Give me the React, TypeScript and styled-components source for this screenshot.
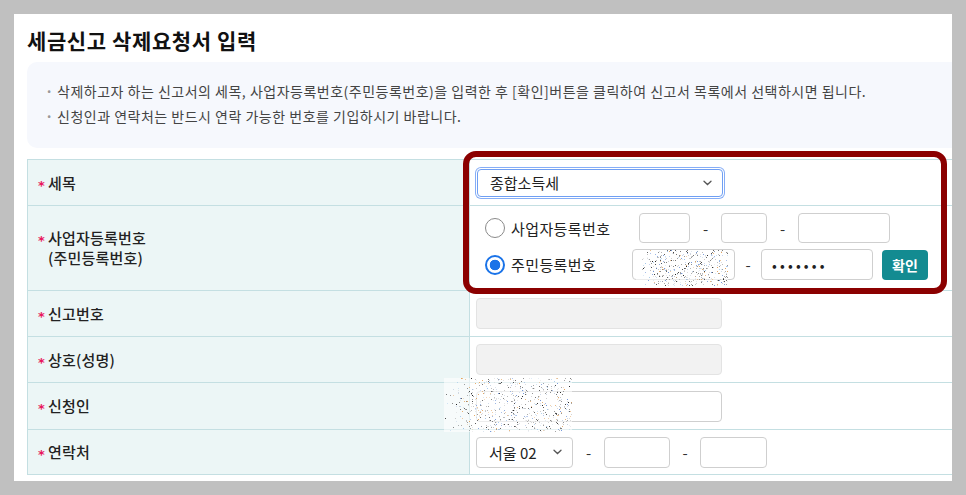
import React, { useMemo } from 'react'
import styled, { createGlobalStyle } from 'styled-components'

const GlobalStyle = createGlobalStyle`
  html, body {
    margin: 0;
    padding: 0;
  }
  body {
    font-family: "Noto Sans CJK KR", "Noto Sans", sans-serif;
    color: #222;
  }
  * {
    box-sizing: border-box;
  }
`

// small seeded random so the mosaic is the same on every run
const mulberry32 = (a: number) => () => {
  a |= 0
  a = (a + 0x6d2b79f5) | 0
  let t = Math.imul(a ^ (a >>> 15), 1 | a)
  t = (t + Math.imul(t ^ (t >>> 7), 61 | t)) ^ t
  return ((t ^ (t >>> 14)) >>> 0) / 4294967296
}

const NOISE_COLORS = ['#222', '#444', '#777', '#999', '#bbb', '#6f93d8', '#9cc3e8', '#e3a35c', '#c9d6e6', '#d8d8d8']

interface NoiseProps {
  seed: number
  w: number
  h: number
  count: number
  x: number
  y: number
}

const Noise: React.FC<NoiseProps> = ({ seed, w, h, count, x, y }) => {
  const dots = useMemo(() => {
    const rnd = mulberry32(seed)
    const list = []
    for (let i = 0; i < count; i++) {
      const px = Math.floor(rnd() * w)
      const py = Math.floor(rnd() * h)
      // thin out the left edge so it fades like the reference
      if (px < w * 0.25 && rnd() > px / (w * 0.25)) continue
      list.push({
        x: px,
        y: py,
        c: NOISE_COLORS[Math.floor(rnd() * NOISE_COLORS.length)],
        o: 0.3 + rnd() * 0.7,
      })
    }
    return list
  }, [seed, w, h, count])

  return (
    <NoiseLayer style={{ left: x, top: y, width: w, height: h }}>
      <svg width={w} height={h} viewBox={`0 0 ${w} ${h}`}>
        {dots.map((d, i) => (
          <rect key={i} x={d.x} y={d.y} width={1} height={1} fill={d.c} opacity={d.o} />
        ))}
      </svg>
    </NoiseLayer>
  )
}

const Chevron = () => (
  <svg width='9' height='6' viewBox='0 0 9 6'>
    <path d='M1 1.2l3.5 3.3 3.5-3.3' fill='none' stroke='#555' strokeWidth='1.3' strokeLinecap='round' />
  </svg>
)

const Label: React.FC<{ children: React.ReactNode }> = ({ children }) => (
  <LabelCell>
    <LabelGroup>
      <Star>*</Star>
      <LabelText>{children}</LabelText>
    </LabelGroup>
  </LabelCell>
)

const App: React.FC = () => {
  return (
    <Frame>
      <GlobalStyle />
      <Page>
        <Title>세금신고 삭제요청서 입력</Title>

        <Notice>
          <NoticeLine>
            <Bullet>·</Bullet>
            삭제하고자 하는 신고서의 세목, 사업자등록번호(주민등록번호)을 입력한 후 [확인]버튼을 클릭하여 신고서 목록에서 선택하시면 됩니다.
          </NoticeLine>
          <NoticeLine>
            <Bullet>·</Bullet>
            신청인과 연락처는 반드시 연락 가능한 번호를 기입하시기 바랍니다.
          </NoticeLine>
        </Notice>

        <Table>
          <Row $h={46}>
            <Label>세목</Label>
            <FieldCell>
              <SelectBox $w={246} $h={28} $focus>
                <span>종합소득세</span>
                <Chevron />
              </SelectBox>
            </FieldCell>
          </Row>

          <Row $h={85}>
            <Label>
              사업자등록번호
              <br />
              (주민등록번호)
            </Label>
            <FieldCell $stack>
              <RadioLine>
                <Radio />
                <RadioLabel $w={134}>사업자등록번호</RadioLabel>
                <TextBox $w={51} $h={30} />
                <Dash $w={31}>-</Dash>
                <TextBox $w={46} $h={30} />
                <Dash $w={31}>-</Dash>
                <TextBox $w={92} $h={30} />
              </RadioLine>
              <RadioLine>
                <Radio $checked />
                <RadioLabel $w={127}>주민등록번호</RadioLabel>
                <TextBox $w={103} $h={31} />
                <Dash $w={26}>-</Dash>
                <TextBox $w={112} $h={31} type='password' defaultValue='1234567' readOnly $pw />
                <ConfirmButton>확인</ConfirmButton>
              </RadioLine>
            </FieldCell>
          </Row>

          <Row $h={46}>
            <Label>신고번호</Label>
            <FieldCell>
              <TextBox $w={246} $h={31} disabled />
            </FieldCell>
          </Row>

          <Row $h={46}>
            <Label>상호(성명)</Label>
            <FieldCell>
              <TextBox $w={246} $h={31} disabled />
            </FieldCell>
          </Row>

          <Row $h={47}>
            <Label>신청인</Label>
            <FieldCell>
              <TextBox $w={246} $h={31} />
            </FieldCell>
          </Row>

          <Row $h={45}>
            <Label>연락처</Label>
            <FieldCell>
              <SelectBox $w={97} $h={31}>
                <span>서울 02</span>
                <Chevron />
              </SelectBox>
              <Dash $w={31}>-</Dash>
              <TextBox $w={66} $h={31} />
              <Dash $w={30}>-</Dash>
              <TextBox $w={67} $h={31} />
            </FieldCell>
          </Row>
        </Table>

        <Highlight />
        <Noise seed={7} x={622} y={236} w={92} h={36} count={550} />
        <Noise seed={21} x={430} y={364} w={128} h={54} count={750} />
      </Page>
    </Frame>
  )
}

const Frame = styled.div`
  display: flex;
  height: 495px;
  padding: 14px;
  background: #c0c0c0;
`

const Page = styled.div`
  position: relative;
  flex: 1;
  display: flex;
  flex-direction: column;
  padding: 14px 0 0 13px;
  background: #fff;
  overflow: hidden;
`

const Title = styled.h1`
  margin: 0;
  font-size: 21px;
  line-height: 24px;
  font-weight: 700;
  color: #111;
  letter-spacing: 0.6px;
`

const Notice = styled.div`
  margin-top: 10px;
  height: 86px;
  padding: 17px 0 0 18px;
  background: #f6f8fd;
  border-radius: 10px 0 0 10px;
`

const NoticeLine = styled.p`
  display: flex;
  margin: 0;
  font-size: 14px;
  line-height: 25px;
  color: #444;
  white-space: nowrap;
  letter-spacing: 0.5px;
`

const Bullet = styled.span`
  width: 12px;
  color: #999;
  font-weight: 700;
`

const Table = styled.div`
  margin-top: 11px;
  border-top: 1px solid #c4dfe2;
  border-left: 1px solid #c4dfe2;
`

const Row = styled.div<{ $h: number }>`
  display: grid;
  grid-template-columns: 442px 1fr;
  height: ${(p) => p.$h}px;
  border-bottom: 1px solid #c4dfe2;
`

const LabelCell = styled.div`
  display: flex;
  align-items: center;
  padding-left: 10px;
  background: #ecf6f6;
  border-right: 1px solid #c4dfe2;
`

const LabelGroup = styled.div`
  display: flex;
  align-items: flex-start;
`

const Star = styled.span`
  flex: none;
  width: 10px;
  font-family: "DejaVu Sans", sans-serif;
  font-size: 13px;
  font-weight: 700;
  line-height: 20px;
  color: #e8175d;
  transform: translateY(3px);
`

const LabelText = styled.span`
  font-size: 15px;
  line-height: 20px;
  font-weight: 500;
  color: #222;
  letter-spacing: 0.2px;
`

const FieldCell = styled.div<{ $stack?: boolean }>`
  display: flex;
  flex-direction: ${(p) => (p.$stack ? 'column' : 'row')};
  align-items: ${(p) => (p.$stack ? 'stretch' : 'center')};
  gap: ${(p) => (p.$stack ? '6px' : '0')};
  padding: ${(p) => (p.$stack ? '7px 0 0 6px' : '0 0 0 6px')};
`

const SelectBox = styled.div<{ $w: number; $h: number; $focus?: boolean }>`
  display: flex;
  align-items: center;
  justify-content: space-between;
  width: ${(p) => p.$w}px;
  height: ${(p) => p.$h}px;
  margin-left: ${(p) => (p.$focus ? '1px' : '0')};
  padding: 0 10px 0 12px;
  font-size: 15px;
  color: #222;
  background: #fff;
  border: 1px solid ${(p) => (p.$focus ? '#6f9ff3' : '#cfcfcf')};
  border-radius: 4px;
  box-shadow: ${(p) => (p.$focus ? '0 0 0 1px #fff, 0 0 0 2px #86adf6' : 'none')};
`

const TextBox = styled.input<{ $w: number; $h: number; $pw?: boolean }>`
  flex: none;
  width: ${(p) => p.$w}px;
  height: ${(p) => p.$h}px;
  margin: 0;
  padding: 0 10px;
  font-family: inherit;
  font-size: 14px;
  letter-spacing: ${(p) => (p.$pw ? '3.2px' : '0')};
  color: #222;
  background: #fff;
  border: 1px solid #cfcfcf;
  border-radius: 4px;
  outline: none;

  &:disabled {
    background: #f2f2f2;
    border-color: #e3e3e3;
  }
`

const Dash = styled.span<{ $w: number }>`
  flex: none;
  width: ${(p) => p.$w}px;
  text-align: center;
  font-size: 15px;
  color: #333;
`

const RadioLine = styled.div`
  display: flex;
  align-items: center;
  padding-left: 9px;
`

const Radio = styled.span<{ $checked?: boolean }>`
  flex: none;
  width: 20px;
  height: 20px;
  border-radius: 50%;
  border: ${(p) => (p.$checked ? '2px solid #1a73e8' : '1px solid #8a8a8a')};
  background: ${(p) => (p.$checked ? 'radial-gradient(circle, #1a73e8 0 5px, #fff 5.6px)' : '#fff')};
`

const RadioLabel = styled.span<{ $w: number }>`
  flex: none;
  width: ${(p) => p.$w}px;
  padding-left: 6px;
  font-size: 15px;
  color: #222;
  letter-spacing: 0.4px;
`

const ConfirmButton = styled.button`
  flex: none;
  width: 46px;
  height: 30px;
  margin-left: 9px;
  padding: 0;
  font-family: inherit;
  font-size: 14px;
  font-weight: 700;
  color: #fff;
  background: #138b91;
  border: none;
  border-radius: 4px;
`

const Highlight = styled.div`
  position: absolute;
  left: 449px;
  top: 137px;
  width: 484px;
  height: 143px;
  border: 6px solid #8b0000;
  border-radius: 13px;
  pointer-events: none;
`

const NoiseLayer = styled.div`
  position: absolute;
  background: rgba(255, 255, 255, 0.6);
  pointer-events: none;

  svg {
    display: block;
  }
`

export default App
